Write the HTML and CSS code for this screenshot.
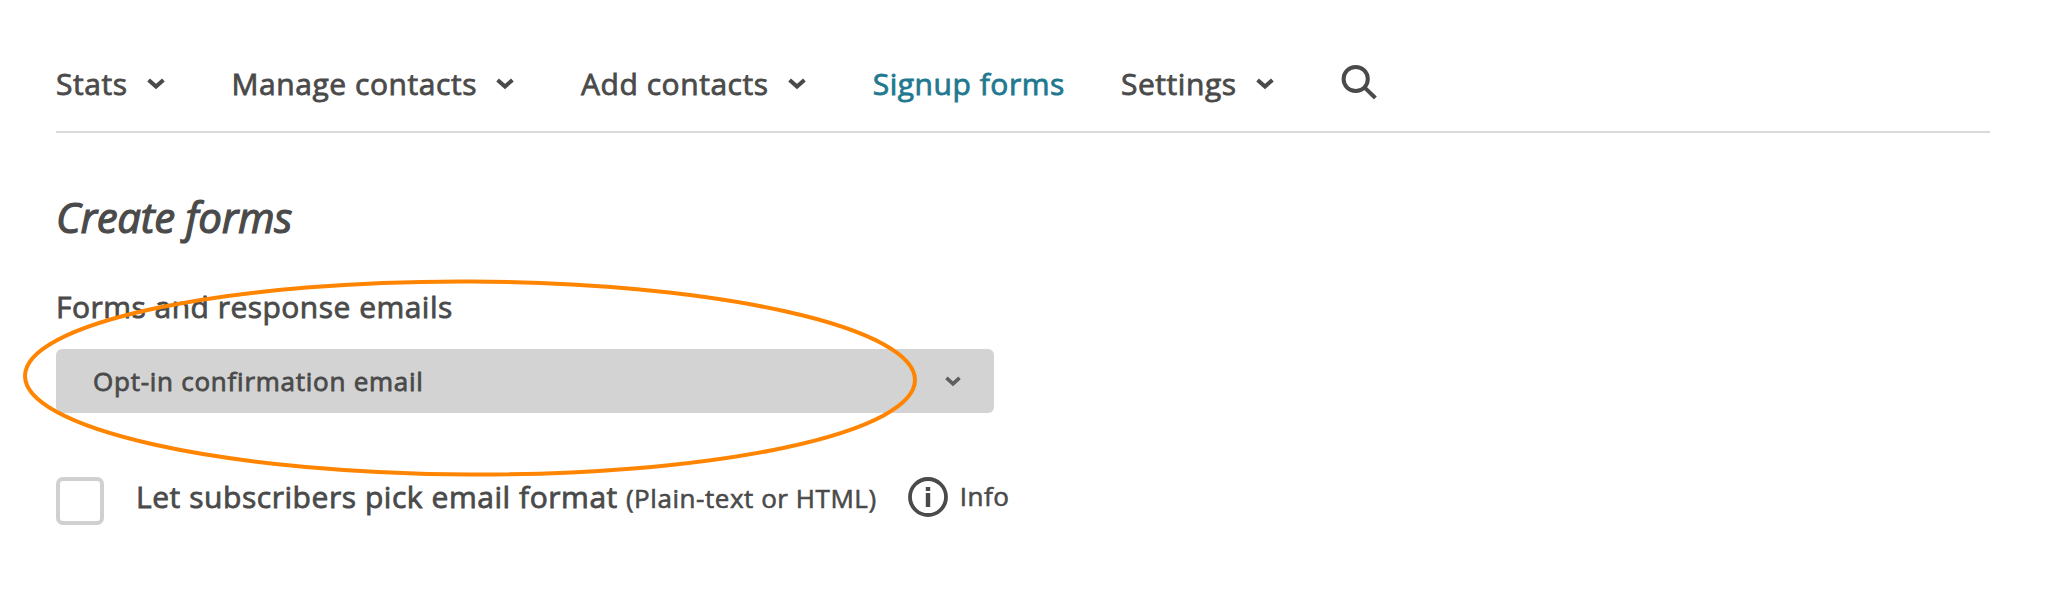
FILE: index.html
```html
<!DOCTYPE html>
<html lang="en">
<head>
  <meta charset="UTF-8">
  <title>Create forms</title>
  <link rel="stylesheet" href="styles.css">
</head>
<body>

<nav class="nav">
  <a class="nav-item">Stats <svg class="caret" viewBox="0 0 18 12"><path d="M1.6 2l7.4 6.6 7.4-6.6"/></svg></a>
  <a class="nav-item">Manage contacts <svg class="caret" viewBox="0 0 18 12"><path d="M1.6 2l7.4 6.6 7.4-6.6"/></svg></a>
  <a class="nav-item">Add contacts <svg class="caret" viewBox="0 0 18 12"><path d="M1.6 2l7.4 6.6 7.4-6.6"/></svg></a>
  <a class="nav-item active">Signup forms</a>
  <a class="nav-item">Settings <svg class="caret" viewBox="0 0 18 12"><path d="M1.6 2l7.4 6.6 7.4-6.6"/></svg></a>
  <a class="search">
    <svg viewBox="0 0 36 36"><circle cx="14.7" cy="15" r="12.1"/><path d="M23.4 23.4l11 10.6"/></svg>
  </a>
</nav>

<main class="content">
  <h1>Create forms</h1>

  <div class="field">
    <label class="field-label">Forms and response emails</label>
    <div class="select">
      <span>Opt-in confirmation email</span>
      <svg class="select-caret" viewBox="0 0 18 12"><path d="M1.6 2l7.4 6.6 7.4-6.6"/></svg>
    </div>
    <svg class="highlight" viewBox="0 0 900 200">
      <ellipse cx="450" cy="100" rx="445" ry="96.5" transform="rotate(0.27 450 100)"/>
    </svg>
  </div>

  <div class="option">
    <span class="checkbox"></span>
    <span class="option-label">Let subscribers pick email format</span>
    <span class="option-hint">(Plain-text or HTML)</span>
    <svg class="info-icon" viewBox="0 0 40 40">
      <circle cx="20" cy="20" r="18"/>
      <path d="M17.8 10h4.4v4h-4.4zM17.8 16h4.4v14h-4.4z"/>
    </svg>
    <span class="info">Info</span>
  </div>
</main>

</body>
</html>
```

FILE: styles.css
```css
body {
  font-family: 'Open Sans', sans-serif;
  font-size: 30px;
  line-height: 40px;
  letter-spacing: 0.55px;
  -webkit-text-stroke: 0.8px;
  color: #4a4a4a;
  background: #fff;
  margin: 0;
  padding: 0 56px;
}

.nav {
  display: flex;
  align-items: center;
  gap: 56px;
  height: 133px;
  padding-top: 36px;
  box-sizing: border-box;
  border-bottom: 2px solid #d9d9d9;
}

.nav-item {
  display: flex;
  align-items: center;
  white-space: nowrap;
}

.nav-item.active {
  color: #21788f;
}

.caret {
  width: 18px;
  height: 12px;
  margin: 0 11px 0 19px;
}

.caret path,
.select-caret path {
  fill: none;
  stroke: #4a4a4a;
  stroke-width: 4;
}

.search {
  display: flex;
  margin-bottom: 3px;
}

.search svg {
  width: 36px;
  height: 36px;
  fill: none;
  stroke: #4a4a4a;
  stroke-width: 4;
}

h1 {
  font-size: 42px;
  font-style: italic;
  font-weight: normal;
  line-height: 56px;
  letter-spacing: -0.3px;
  -webkit-text-stroke: 1.2px;
  margin: 56px 0 0;
}

.field {
  position: relative;
  width: 938px;
  margin-top: 42px;
}

.field-label {
  display: block;
  letter-spacing: 0.48px;
}

.select {
  display: flex;
  align-items: center;
  justify-content: space-between;
  height: 64px;
  margin-top: 22px;
  padding: 0 33px 0 37px;
  box-sizing: border-box;
  border-radius: 6px;
  background: #d3d3d3;
  font-size: 26px;
  letter-spacing: 0.75px;
}

.select-caret {
  width: 16px;
  height: 11px;
}

.select-caret path {
  stroke: #5e5e5e;
}

.highlight {
  position: absolute;
  left: -36px;
  top: -9px;
  width: 900px;
  height: 200px;
  fill: none;
  stroke: #ff8400;
  stroke-width: 4;
}

.option {
  display: flex;
  align-items: baseline;
  margin-top: 64px;
  height: 48px;
  white-space: nowrap;
}

.checkbox {
  align-self: flex-start;
  width: 48px;
  height: 48px;
  box-sizing: border-box;
  border: 4px solid #d0d0d0;
  border-radius: 7px;
  margin-right: 32px;
}

.option-hint {
  font-size: 26px;
  margin-left: 8px;
  -webkit-text-stroke: 0.6px;
}

.info-icon {
  align-self: flex-start;
  width: 40px;
  height: 40px;
  margin: 0 12px 0 31px;
  fill: #4a4a4a;
}

.info-icon circle {
  fill: none;
  stroke: #4a4a4a;
  stroke-width: 3.8;
}

.info {
  font-size: 26px;
  position: relative;
  top: -2px;
  -webkit-text-stroke: 0.6px;
}
```
